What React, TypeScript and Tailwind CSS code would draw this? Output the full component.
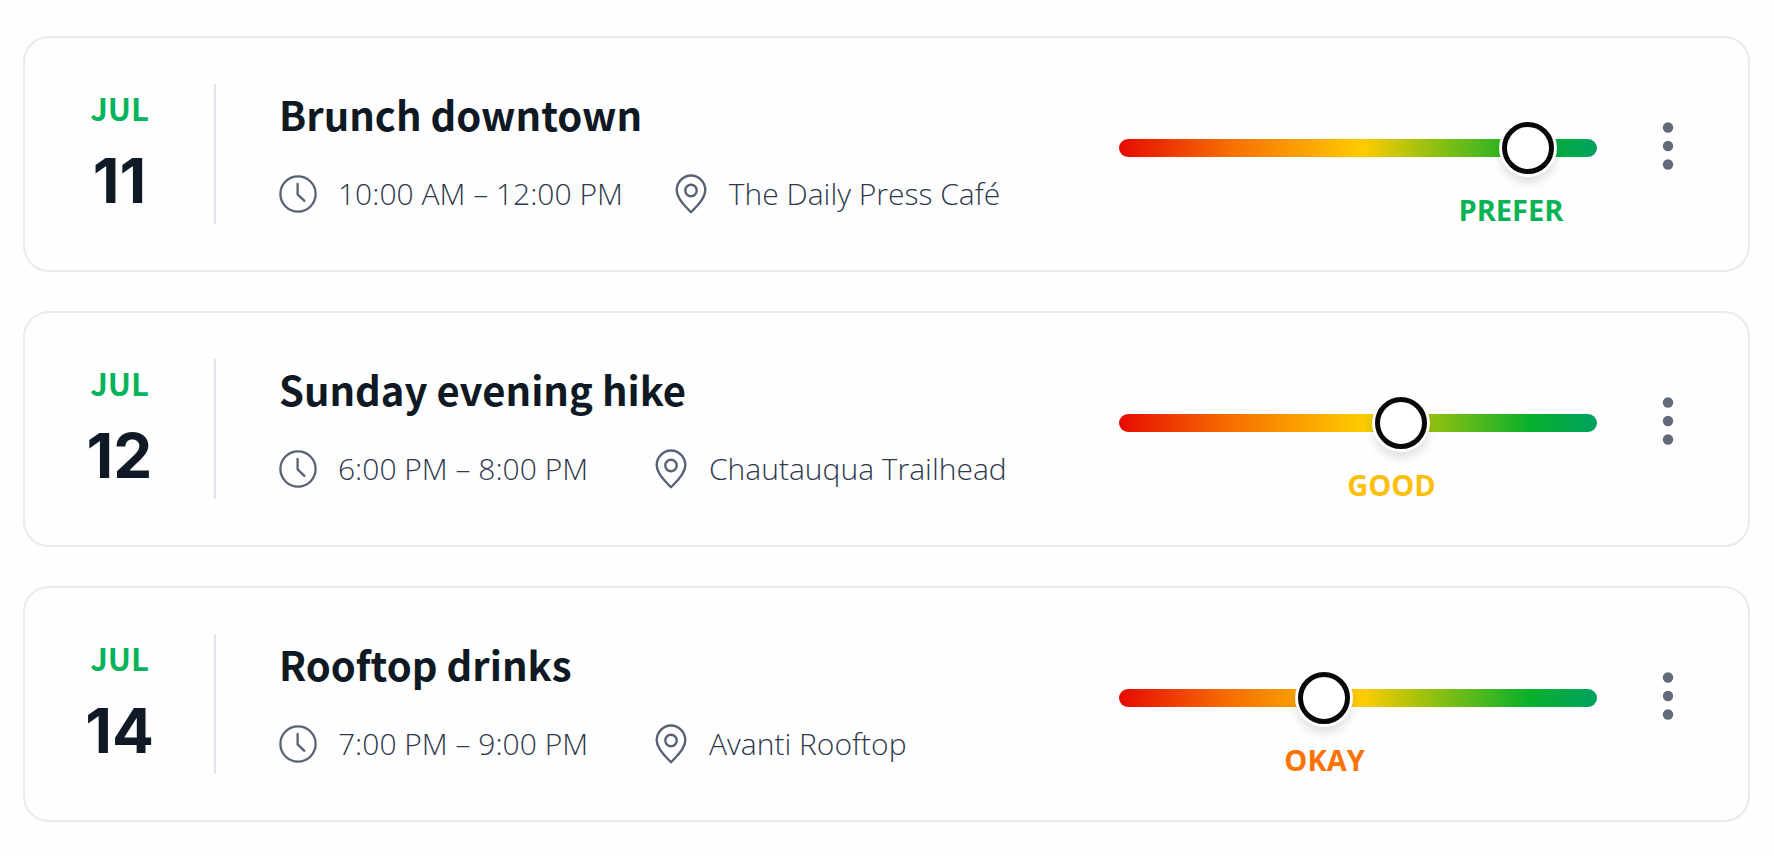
import { useState } from "react";

type Plan = {
  id: string;
  month: string;
  day: string;
  title: string;
  time: string;
  place: string;
  value: number;
  rating: string;
  ratingAt: number;
  ratingColor: string;
};

const plans: Plan[] = [
  {
    id: "brunch",
    month: "JUL",
    day: "11",
    title: "Brunch downtown",
    time: "10:00 AM – 12:00 PM",
    place: "The Daily Press Café",
    value: 90,
    rating: "PREFER",
    ratingAt: 82,
    ratingColor: "text-[#05b354]",
  },
  {
    id: "hike",
    month: "JUL",
    day: "12",
    title: "Sunday evening hike",
    time: "6:00 PM – 8:00 PM",
    place: "Chautauqua Trailhead",
    value: 60,
    rating: "GOOD",
    ratingAt: 57,
    ratingColor: "text-[#fbbf0c]",
  },
  {
    id: "drinks",
    month: "JUL",
    day: "14",
    title: "Rooftop drinks",
    time: "7:00 PM – 9:00 PM",
    place: "Avanti Rooftop",
    value: 42,
    rating: "OKAY",
    ratingAt: 43,
    ratingColor: "text-[#fb7305]",
  },
];

function ClockIcon() {
  return (
    <svg className="size-[38px] shrink-0 text-[#596175]" viewBox="0 0 38 38" fill="none" stroke="currentColor" strokeWidth="2.3" strokeLinecap="round" strokeLinejoin="round" aria-hidden="true">
      <circle cx="19" cy="19" r="17.6" />
      <path d="M18.6 9v10.4l6.8 6.4" />
    </svg>
  );
}

function PinIcon() {
  return (
    <svg className="h-10 w-8 shrink-0 text-[#596175]" viewBox="0 0 32 40" fill="none" stroke="currentColor" strokeWidth="2.4" strokeLinejoin="round" aria-hidden="true">
      <path d="M16 38.2C12.500 34.500 1.700 25.500 1.700 16.200a14.300 14.700 0 0 1 28.600 0C30.300 25.500 19.500 34.500 16 38.200Z" />
      <circle cx="16" cy="16.500" r="5.700" />
    </svg>
  );
}

function PlanCard({ plan }: { plan: Plan }) {
  const [value, setValue] = useState(plan.value);
  return (
    <article className="flex min-h-[236px] items-stretch rounded-[26px] border-2 border-[#e8eaf0] bg-[#fefefe]">
      <div className="my-[46px] flex w-[191px] shrink-0 flex-col items-center border-r-2 border-[#e1e4ea] pt-[3px] font-bold">
        <span className="font-['Noto_Sans_CJK_SC',sans-serif] text-[31px] leading-[42px] text-[#05b35a]">{plan.month}</span>
        <span className="mt-5 font-['Inter',sans-serif] text-[62px] leading-[64px] text-[#0f1a26]">{plan.day}</span>
      </div>
      <div className="flex min-w-0 flex-1 flex-col pt-[48px] pl-[63px]">
        <h2 className="font-['Noto_Sans_CJK_SC',sans-serif] text-[40px] leading-[56px] font-bold text-[#0f1923]">{plan.title}</h2>
        <div className="mt-[30px] flex items-center text-[30px] leading-[44px] font-light text-[#2f384c]">
          <div className="flex min-w-[324px] items-center gap-[21px]">
            <ClockIcon />
            <span className="whitespace-nowrap">{plan.time}</span>
          </div>
          <div className="ml-[52px] flex items-center gap-[22px]">
            <PinIcon />
            <span className="whitespace-nowrap">{plan.place}</span>
          </div>
        </div>
      </div>
      <div className="flex w-[478px] shrink-0 flex-col pt-[84px]">
        <input
          type="range"
          min={0}
          max={100}
          value={value}
          onChange={(e) => setValue(Number(e.target.value))}
          aria-label={`Preference for ${plan.title}`}
          className="h-[52px] w-full cursor-pointer appearance-none bg-transparent [&::-webkit-slider-runnable-track]:h-[18px] [&::-webkit-slider-runnable-track]:rounded-full [&::-webkit-slider-runnable-track]:bg-[linear-gradient(90deg,#e60a00_0%,#f56a00_22%,#fb9a00_36%,#fdcc00_51%,#8fc010_66%,#08b02c_86%,#00a160_100%)] [&::-webkit-slider-thumb]:-mt-[17px] [&::-webkit-slider-thumb]:size-[52px] [&::-webkit-slider-thumb]:appearance-none [&::-webkit-slider-thumb]:rounded-full [&::-webkit-slider-thumb]:border-[5px] [&::-webkit-slider-thumb]:border-[#080808] [&::-webkit-slider-thumb]:bg-white [&::-webkit-slider-thumb]:shadow-[0_0_0_3px_#ffffff,0_7px_10px_2px_rgba(0,0,0,0.12)]"
        />
        <div style={{ marginLeft: `${plan.ratingAt}%` }} className={`mt-4 w-fit -translate-x-1/2 text-[29px] leading-[40px] font-bold ${plan.ratingColor}`}>
          {plan.rating}
        </div>
      </div>
      <div className="mr-[54px] ml-[45px] flex shrink-0 items-start pt-[82px]">
        <button type="button" aria-label={`More options for ${plan.title}`} className="flex h-[52px] w-[52px] cursor-pointer items-center justify-center text-[#636b7a]">
          <svg className="h-12 w-3" viewBox="0 0 12 48" fill="currentColor" aria-hidden="true">
            <circle cx="6" cy="5.500" r="5.200" />
            <circle cx="6" cy="24" r="5.200" />
            <circle cx="6" cy="42.500" r="5.200" />
          </svg>
        </button>
      </div>
    </article>
  );
}

export default function App() {
  return (
    <main className="flex min-h-screen flex-col gap-[39px] bg-[#fefefe] pt-9 pr-6 pb-8 pl-[23px] font-['Open_Sans','Noto_Sans',sans-serif]">
      {plans.map((plan) => (
        <PlanCard key={plan.id} plan={plan} />
      ))}
    </main>
  );
}
